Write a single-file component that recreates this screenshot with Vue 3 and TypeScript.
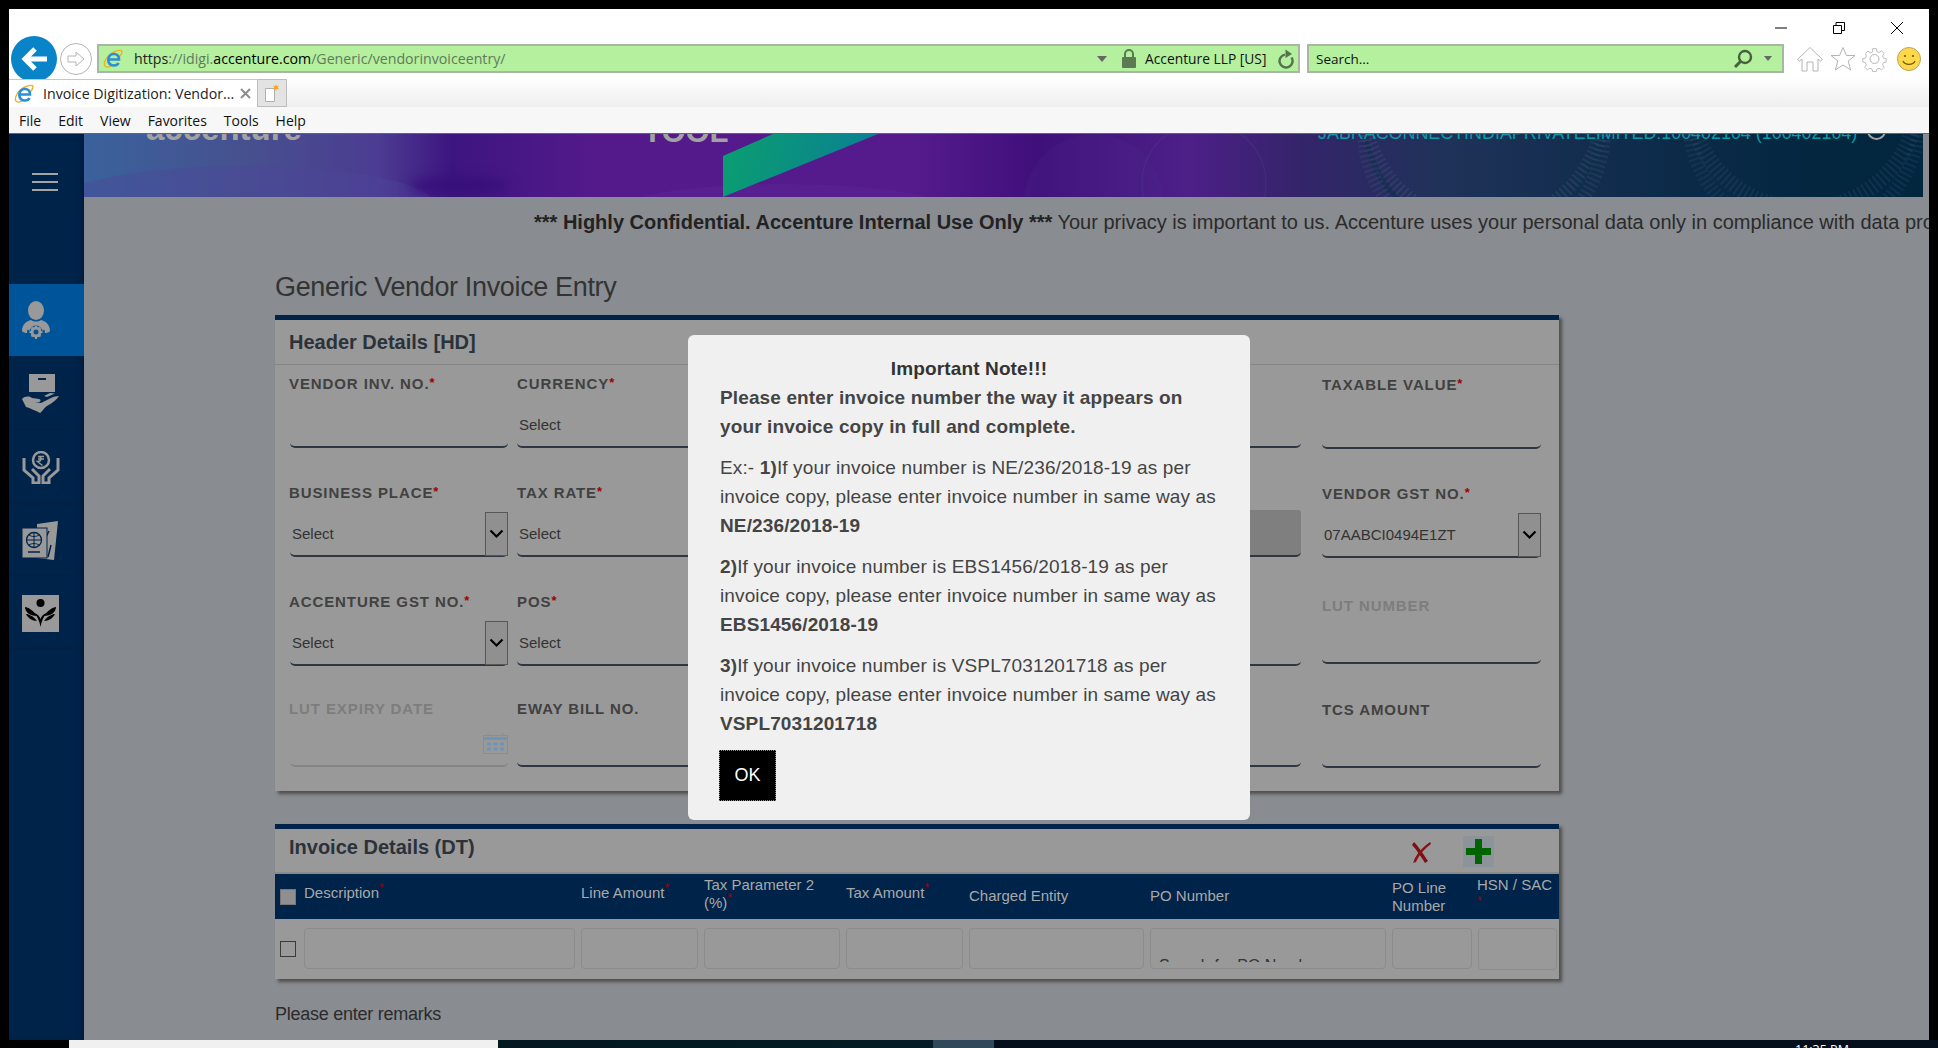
<script setup lang="ts">
interface Field {
  label?: string
  req?: boolean
  kind?: 'input' | 'select' | 'plain' | 'disabled' | 'date' | 'none'
  value?: string
  muted?: boolean
  cls?: string
}

const rows: { cls: string; fields: Field[] }[] = [
  {
    cls: '',
    fields: [
      { label: 'Vendor Inv. No.', req: true, kind: 'input' },
      { label: 'Currency', req: true, kind: 'plain', value: 'Select' },
      { kind: 'none' },
      { kind: 'input' },
      { label: 'Taxable Value', req: true, kind: 'input', cls: 'last' },
    ],
  },
  {
    cls: '',
    fields: [
      { label: 'Business Place', req: true, kind: 'select', value: 'Select' },
      { label: 'Tax Rate', req: true, kind: 'plain', value: 'Select' },
      { kind: 'none' },
      { kind: 'disabled' },
      { label: 'Vendor GST No.', req: true, kind: 'select', value: '07AABCI0494E1ZT', cls: 'last' },
    ],
  },
  {
    cls: '',
    fields: [
      { label: 'Accenture GST No.', req: true, kind: 'select', value: 'Select' },
      { label: 'POS', req: true, kind: 'plain', value: 'Select' },
      { kind: 'none' },
      { kind: 'input' },
      { label: 'LUT Number', kind: 'input', muted: true, cls: 'last lut' },
    ],
  },
  {
    cls: 'short',
    fields: [
      { label: 'LUT Expiry Date', kind: 'date', muted: true },
      { label: 'Eway Bill No.', kind: 'input' },
      { kind: 'none' },
      { kind: 'input' },
      { label: 'TCS Amount', kind: 'input', cls: 'last' },
    ],
  },
]

const cols: { label: string; req?: boolean; cls?: string; width: number }[] = [
  { label: 'Description', req: true, width: 277 },
  { label: 'Line Amount', req: true, width: 123 },
  { label: 'Tax Parameter 2 (%)', req: true, cls: 'two', width: 142 },
  { label: 'Tax Amount', req: true, width: 123 },
  { label: 'Charged Entity', cls: 'low', width: 181 },
  { label: 'PO Number', cls: 'low', width: 242 },
  { label: 'PO Line Number', cls: 'low two', width: 86 },
  { label: 'HSN / SAC', req: true, cls: 'hsn', width: 81 },
]

const menu = ['File', 'Edit', 'View', 'Favorites', 'Tools', 'Help']
</script>

<template>
  <div class="root">
    <div class="window">
      <header class="chrome">
        <div class="winbar">
          <svg class="wc" width="14" height="14" viewBox="0 0 14 14"><path d="M1 7h12" stroke="#000" stroke-width="1" /></svg>
          <svg class="wc" width="14" height="14" viewBox="0 0 14 14" fill="none" stroke="#000"><path d="M1.5 4.5h8v8h-8zM4 4.5v-3h8.500v8h-3" /></svg>
          <svg class="wc" width="14" height="14" viewBox="0 0 14 14"><path d="M1 1l12 12M13 1L1 13" stroke="#000" stroke-width="1" /></svg>
        </div>
        <div class="navrow">
          <div class="back">
            <svg width="46" height="46" viewBox="0 0 46 46"><circle cx="23" cy="23" r="23" fill="#0a84c8" /><path d="M36 23H15M24 13L14 23l10 10" fill="none" stroke="#fff" stroke-width="5" /></svg>
          </div>
          <div class="forward">
            <svg width="32" height="32" viewBox="0 0 32 32" fill="none" stroke="#b5b5b5"><circle cx="16" cy="16" r="15.500" /><path d="M8 13h8V9l8 7-8 7v-4H8z" /></svg>
          </div>
          <div class="address">
            <svg class="ie" width="20" height="20" viewBox="0 0 20 20"><path d="M2 17C0 14 4 6 11 3c4-1.800 8-2.500 8 0 0 2-2 4-3 5" fill="none" stroke="#f0b020" stroke-width="1.400" /><path d="M2 17c1 2 5 1 8-1" fill="none" stroke="#f0b020" stroke-width="1.400" /><path d="M6 10.500h10c0-3.500-1.800-5.500-5-5.500-3.400 0-5.700 2.500-5.700 6 0 3.200 2.200 5.500 5.700 5.500 2.200 0 3.800-1 4.500-2.500" fill="none" stroke="#2b8fd8" stroke-width="2.600" /></svg>
            <span class="url"><span class="dk">https</span><span class="gr">://idigi.</span><span class="bk">accenture.com</span><span class="gr">/Generic/vendorinvoiceentry/</span></span>
            <i class="caret"></i>
            <svg class="lock" width="14" height="19" viewBox="0 0 14 19"><path d="M3 8V5a4 4 0 018 0v3" fill="none" stroke="#5b7a52" stroke-width="2" /><rect y="8" width="14" height="11" rx="1" fill="#5b7a52" /></svg>
            <span class="cert">Accenture LLP [US]</span>
            <svg class="refresh" width="18" height="20" viewBox="0 0 18 20"><path d="M14.500 8.500A6.500 6.500 0 118 5.600" fill="none" stroke="#56734f" stroke-width="2.400" /><path d="M8.500.5L15 5l-6.500 4z" fill="#56734f" /></svg>
          </div>
          <div class="search">
            <span class="stext">Search...</span>
            <svg class="mag" width="22" height="20" viewBox="0 0 22 20"><circle cx="13" cy="8" r="6" fill="none" stroke="#46603f" stroke-width="2.400" /><path d="M8.500 12.500L3 18" stroke="#46603f" stroke-width="3" /></svg>
            <i class="caret small"></i>
          </div>
          <div class="tools">
            <svg width="28" height="26" viewBox="0 0 28 26" fill="none" stroke="#b4b4b4"><path d="M1.500 13.500L14 1.500l12.500 12-2 1.500L22 13v12h-5V16h-6v9H6V13l-2.500 2z" /></svg>
            <svg width="26" height="26" viewBox="0 0 26 26" fill="none" stroke="#b4b4b4"><path d="M13 1.500l3.400 8h8.600l-6.800 5.500 2.500 9L13 19l-7.700 5 2.500-9L1 9.500h8.600z" /></svg>
            <svg width="25" height="26" viewBox="0 0 25 26" fill="none" stroke="#b4b4b4"><circle cx="12.500" cy="13" r="4.500" /><path d="M10.500 1.500h4l.7 3.200 2.400 1 2.800-1.700 2.800 2.800-1.700 2.800 1 2.400 3 .7v3.600l-3 .7-1 2.400 1.700 2.800-2.800 2.800-2.800-1.700-2.400 1-.7 2.700h-4l-.7-2.700-2.400-1-2.800 1.700-2.800-2.800 1.700-2.800-1-2.400-3-.7v-3.600l3-.7 1-2.400L2.600 7.100l2.800-2.800 2.800 1.700 2.400-1z" transform="translate(1.200 1.300) scale(.9)" /></svg>
            <svg class="smile" width="24" height="24" viewBox="0 0 24 24"><circle cx="12" cy="12" r="11.500" fill="#ffd84a" stroke="#b0a468" /><circle cx="8" cy="9" r="1.100" fill="#6b5a12" /><circle cx="16" cy="9" r="1.100" fill="#6b5a12" /><path d="M6 14c2 4.500 10 4.500 12 0" fill="none" stroke="#6b5a12" stroke-width="1.200" /></svg>
          </div>
        </div>
        <div class="tabrow">
          <div class="tab">
            <svg class="ie" width="20" height="20" viewBox="0 0 20 20"><path d="M2 17C0 14 4 6 11 3c4-1.800 8-2.500 8 0 0 2-2 4-3 5" fill="none" stroke="#f0b020" stroke-width="1.400" /><path d="M2 17c1 2 5 1 8-1" fill="none" stroke="#f0b020" stroke-width="1.400" /><path d="M6 10.500h10c0-3.500-1.800-5.500-5-5.500-3.400 0-5.700 2.500-5.700 6 0 3.200 2.200 5.500 5.700 5.500 2.200 0 3.800-1 4.500-2.500" fill="none" stroke="#2b8fd8" stroke-width="2.600" /></svg>
            <span class="tabtitle">Invoice Digitization: Vendor...</span>
            <svg class="tabx" width="11" height="11" viewBox="0 0 11 11"><path d="M1 1l9 9M10 1l-9 9" stroke="#8d8d8d" stroke-width="2" /></svg>
          </div>
          <div class="newtab">
            <svg width="16" height="18" viewBox="0 0 16 18"><path d="M1.500 4.500h9v13h-9z" fill="#fff" stroke="#b0b0b0" /><path d="M12 0l.8 2.200L15 1.500l-1.300 2 1.300 2-2.200-.7L12 7l-.8-2.200-2.200.7 1.300-2-1.300-2 2.200.7z" fill="#f5a623" /></svg>
          </div>
        </div>
        <nav class="menubar">
          <span v-for="m in menu" :key="m">{{ m }}</span>
        </nav>
      </header>

      <div class="page">
        <aside class="sidebar">
          <div class="burger"><i></i><i></i><i></i></div>
          <div class="sitem active">
            <svg width="28" height="38" viewBox="0 0 28 38" fill="#999">
              <ellipse cx="14" cy="9.500" rx="8" ry="9.500" />
              <path d="M0 30c0-7 5-10 9-11 3 2 7 2 10 0 4 1 9 4 9 11-1 1.500-3 2-5 2 0-5-4-9-9-9s-9 4-9 9c-2 0-4-.500-5-2z" />
              <path d="M5 28c1-4 5-7 9-7s8 3 9 7l-3 2H8z" />
              <circle cx="14" cy="31" r="6.500" fill="#00549a" />
              <circle cx="14" cy="31" r="4" fill="none" stroke="#999" stroke-width="3" />
              <path d="M14 25v13M7.500 31h13M9.500 26.500l9 9M18.500 26.500l-9 9" stroke="#999" stroke-width="2" stroke-dasharray="2 9" />
            </svg>
          </div>
          <div class="sitem second">
            <svg width="37" height="39" viewBox="0 0 37 39" fill="#999">
              <rect x="7" width="26" height="18" />
              <rect x="16" y="4" width="8" height="2" fill="#00234a" />
              <path d="M0 25c3-3 7-3 10-1l7 1c2 0 2 3 0 3h-4l6 1 8-4c3-2 7-3 10-3-2 3-6 7-12 10-3 2-5 6-7 7-4-2-10-5-14-6z" />
              <path d="M22 22l6-3 5 .500-8 3.500z" />
            </svg>
          </div>
          <div class="sitem lower">
            <svg width="38" height="33" viewBox="0 0 38 33" fill="none" stroke="#999">
              <circle cx="19" cy="9" r="8" stroke-width="2.500" />
              <path d="M16 5.500h6M16 8h6M16 5.500c4 0 4 5-.500 5l5 4" stroke-width="1.500" />
              <path d="M2 7v12l9 8v5h6v-7l-7-7M36 7v12l-9 8v5h-6v-7l7-7" stroke-width="3" />
            </svg>
          </div>
          <div class="sitem lower">
            <svg width="37" height="39" viewBox="0 0 37 39" fill="none">
              <path d="M15 3l21-3-4 39-17-2z" fill="#999" />
              <path d="M27 10l-5 10M24 24l-3 10M29 24l-3 12" stroke="#00234a" stroke-width="1.500" />
              <rect y="7" width="25" height="30" fill="#999" stroke="#00234a" />
              <circle cx="12" cy="19" r="7.500" stroke="#00234a" stroke-width="1.300" />
              <path d="M4.500 19h15M12 11.500v15M7 14c3 2 7 2 10 0M7 24c3-2 7-2 10 0" stroke="#00234a" stroke-width="1" />
              <path d="M6 31h12" stroke="#00234a" stroke-width="1.500" />
            </svg>
          </div>
          <div class="sitem lower">
            <svg class="logo" width="37" height="37" viewBox="0 0 37 37">
              <circle cx="18.500" cy="8" r="4" fill="#000" />
              <path d="M18.500 32c-1-6-3-10-6-14 3 1 5 3 6 6 1-3 3-5 6-6-3 4-5 8-6 14z" fill="#000" />
              <path d="M15 21C12 16 6 12 3 12c0 5 5 9 12 9zM22 21c3-5 9-9 12-9 0 5-5 9-12 9z" fill="#000" />
              <path d="M15 26C11 21 7 19 4 19c2 4 6 7 11 7zM22 26c4-5 8-7 11-7-2 4-6 7-11 7z" fill="#000" />
            </svg>
          </div>
        </aside>

        <main class="content">
          <div class="banner">
            <svg class="coins" width="1839" height="63" viewBox="0 0 1839 63" fill="none">
              <ellipse cx="160" cy="70" rx="190" ry="38" fill="#4d4599" opacity=".4" />
              <ellipse class="blob" cx="375" cy="52" rx="50" ry="9" fill="#38107a" />
              <ellipse cx="700" cy="74" rx="160" ry="24" fill="#5b2394" opacity=".5" />
              <circle cx="1010" cy="70" r="70" fill="#4a2b8a" opacity=".2" />
              <circle cx="1120" cy="50" r="62" stroke="#4b4a8e" stroke-width="1.500" opacity=".25" />
              <circle cx="1400" cy="-30" r="120" stroke="#4a6a85" stroke-width="14" stroke-dasharray="2 3" opacity=".25" />
              <circle cx="1400" cy="-18" r="120" stroke="#0c2d4a" stroke-width="5" opacity=".5" />
              <circle cx="1400" cy="-4" r="120" stroke="#4a6a85" stroke-width="14" stroke-dasharray="2 3" opacity=".22" />
              <circle cx="1720" cy="-40" r="115" stroke="#3e6180" stroke-width="16" stroke-dasharray="2 3" opacity=".22" />
              <circle cx="1720" cy="-14" r="115" stroke="#3e6180" stroke-width="14" stroke-dasharray="2 3" opacity=".2" />
            </svg>
            <div class="swoosh"></div>
            <span class="brand">accenture</span>
            <span class="toolname">TOOL</span>
            <span class="vendor">JABRACONNECTINDIAPRIVATELIMITED:100402104 (100402104)</span>
            <span class="ring"></span>
          </div>

          <p class="notice"><b>*** Highly Confidential. Accenture Internal Use Only ***</b> Your privacy is important to us. Accenture uses your personal data only in compliance with data protection laws and Accenture's data privacy policies.</p>

          <div class="body">
            <h1 class="title">Generic Vendor Invoice Entry</h1>

            <section class="card head-card">
              <h2 class="card-h">Header Details [HD]</h2>
              <div class="grid">
                <template v-for="(r, ri) in rows" :key="ri">
                  <div v-for="(f, fi) in r.fields" :key="fi" class="field" :class="[r.cls, f.cls, { muted: f.muted, first: fi === 0 }]">
                    <template v-if="f.kind !== 'none'">
                      <div class="label">{{ f.label }}<sup v-if="f.req">*</sup></div>
                      <div class="control" :class="f.kind">
                        <span v-if="f.value" class="val">{{ f.value }}</span>
                        <span v-if="f.kind === 'select'" class="dd">
                          <svg width="15" height="10" viewBox="0 0 15 10"><path d="M1.500 1.500l6 6 6-6" fill="none" stroke="#000" stroke-width="2.200" /></svg>
                        </span>
                        <svg v-if="f.kind === 'date'" class="cal" width="25" height="21" viewBox="0 0 25 21" fill="none">
                          <rect x=".5" y="2.500" width="24" height="18" stroke="#6f94b6" />
                          <path d="M0 5.500h25" stroke="#6f94b6" stroke-width="3" />
                          <path d="M5 0v3M20 0v3" stroke="#6f94b6" />
                          <path d="M4 11h4M10.500 11h4M17 11h4M4 16h4M10.500 16h4M17 16h4" stroke="#6f94b6" stroke-width="3" />
                        </svg>
                      </div>
                    </template>
                  </div>
                </template>
              </div>
            </section>

            <section class="card inv-card">
              <div class="inv-h">
                <h2 class="card-h2">Invoice Details (DT)</h2>
                <div class="actions">
                  <svg class="del" width="23" height="21" viewBox="0 0 23 21"><path d="M3 3l2-3c5 5 10 13 14 19l-3 2C12 15 8 8 3 3z" fill="#7e1014" /><path d="M21 0l1 2C15 7 10 13 7 20l-3 1c1-2 1-3 2-5C10 9 15 4 21 0z" fill="#8a1216" /></svg>
                  <span class="add"><svg width="25" height="25" viewBox="0 0 25 25"><path d="M9 0h7v9h9v7h-9v9H9v-9H0V9h9z" fill="#006400" /></svg></span>
                </div>
              </div>
              <div class="thead">
                <div class="chkcell"><span class="chk filled"></span></div>
                <div v-for="c in cols" :key="c.label" class="th" :class="c.cls" :style="{ width: c.width + 'px' }">{{ c.label }}<sup v-if="c.req">*</sup></div>
              </div>
              <div class="trow">
                <div class="chkcell"><span class="chk"></span></div>
                <div v-for="c in cols" :key="c.label" class="td" :style="{ width: c.width + 'px' }">
                  <div class="tinput" :class="c.cls">
                    <div v-if="c.label === 'PO Number'" class="ph">Search for PO Number</div>
                  </div>
                </div>
              </div>
            </section>

            <p class="remarks">Please enter remarks</p>
          </div>
        </main>

        <div class="modal" role="dialog">
          <div class="m-title">Important Note!!!</div>
          <p class="m-lead">Please enter invoice number the way it appears on your invoice copy in full and complete.</p>
          <p class="m-p">Ex:- <b>1)</b>If your invoice number is NE/236/2018-19 as per invoice copy, please enter invoice number in same way as <b>NE/236/2018-19</b></p>
          <p class="m-p"><b>2)</b>If your invoice number is EBS1456/2018-19 as per invoice copy, please enter invoice number in same way as <b>EBS1456/2018-19</b></p>
          <p class="m-p"><b>3)</b>If your invoice number is VSPL7031201718 as per invoice copy, please enter invoice number in same way as <b>VSPL7031201718</b></p>
          <button class="ok" type="button">OK</button>
        </div>
      </div>
    </div>
    <footer class="taskbar">
      <div class="tb-black"></div>
      <div class="tb-search"></div>
      <div class="tb-dark"></div>
      <div class="tb-active"></div>
      <div class="tb-right"><span class="clock">11:35 PM</span></div>
    </footer>
  </div>
</template>

<style>
html, body { margin: 0; padding: 0; background: #000; overflow: hidden; }
</style>

<style scoped>
* { box-sizing: border-box; }
.root { width: 1938px; height: 1048px; background: #000; display: flex; flex-direction: column; padding-top: 9px; overflow: hidden; font-family: "Liberation Sans", sans-serif; }
.window { width: 1920px; height: 1031px; margin-left: 9px; display: flex; flex-direction: column; background: #fff; flex: none; }

.chrome { height: 125px; flex: none; font-family: "Open Sans", sans-serif; color: #222; }
.winbar { height: 35px; display: flex; justify-content: flex-end; align-items: center; padding: 2px 25px 0 0; gap: 44px; }
.wc { flex: none; }
.navrow { height: 29px; display: flex; align-items: center; padding-left: 2px; }
.back { width: 46px; height: 46px; flex: none; margin-top: 1px; }
.forward { width: 32px; height: 32px; flex: none; margin-left: 3px; }
.address { width: 1203px; height: 29px; margin-left: 5px; background: #b4f09e; border: 2px solid #a9b6a4; display: flex; align-items: center; padding-left: 4px; flex: none; }
.ie { flex: none; }
.url { margin-left: 11px; font-size: 14.200px; white-space: nowrap; width: 963px; }
.url .dk { color: #222; }
.url .gr { color: #5f7a5c; }
.url .bk { color: #000; }
.caret { display: block; width: 0; height: 0; border: 5px solid transparent; border-top: 6px solid #666; border-bottom: 0; flex: none; }
.caret.small { border-width: 4px; border-top-width: 5px; border-bottom-width: 0; margin-left: 10px; }
.lock { margin-left: 15px; flex: none; }
.cert { margin-left: 9px; font-size: 13.800px; white-space: nowrap; color: #111; width: 132px; }
.refresh { flex: none; }
.search { width: 477px; height: 29px; margin-left: 7px; background: #b4f09e; border: 2px solid #a9b6a4; display: flex; align-items: center; padding-left: 7px; flex: none; }
.stext { font-size: 13.500px; width: 416px; color: #111; }
.mag { flex: none; }
.tools { display: flex; align-items: center; gap: 6px; margin-left: 12px; flex: none; }
.tools svg { flex: none; }
.tools .smile { margin-left: 4px; }
.tabrow { height: 34px; padding-top: 6px; display: flex; background: linear-gradient(#fff 15%, #eeeeee); }
.tab { width: 249px; height: 28px; background: #fff; border-right: 1px solid #bdbdbd; border-top: 1px solid #c8c8c8; display: flex; align-items: center; padding-left: 5px; }
.tabtitle { margin-left: 9px; font-size: 14.200px; white-space: nowrap; color: #222; width: 197px; }
.tabx { flex: none; }
.newtab { width: 29px; height: 28px; background: #e3e3e3; border: 1px solid #bdbdbd; border-left: 0; display: flex; align-items: center; justify-content: center; }
.menubar { height: 27px; background: #f7f7f7; display: flex; align-items: center; gap: 17px; padding-left: 10px; font-size: 14px; color: #111; border-bottom: 1px solid #666; }

.page { position: relative; height: 906px; flex: none; display: flex; background: #898c90; overflow: hidden; }
.sidebar { width: 75px; flex: none; background: #00234a; display: flex; flex-direction: column; box-shadow: inset -6px 0 6px -4px #001a38; }
.burger { height: 150px; padding: 39px 0 0 23px; display: flex; flex-direction: column; gap: 6px; }
.burger i { display: block; width: 26px; height: 2px; background: #a3a3a3; }
.sitem { height: 73px; display: flex; align-items: center; padding-left: 13px; border-bottom: 1px solid #032040; }
.sitem.active { background: #00549a; height: 72px; border: 0; }
.sitem.second { height: 74px; padding-top: 2px; }
.sitem.lower { padding-top: 2px; }
.logo { background: #999; }

.content { flex: 1; min-width: 0; display: flex; flex-direction: column; }
.banner { position: relative; width: 1839px; height: 63px; flex: none; overflow: hidden; display: flex; background: linear-gradient(90deg, #3a629c 0, #47508f 9%, #4c3c92 16%, #3d1580 20%, #541a8c 28%, #551b8c 45%, #3f0f7a 52%, #4d1f88 60%, #34246a 66%, #1f3258 74%, #0f2c4c 84%, #04263f 94%, #03263f 100%); }
.coins { position: absolute; left: 0; top: 0; }
.blob { filter: blur(6px); }
.swoosh { position: absolute; left: 639px; top: 0; width: 155px; height: 63px; background: linear-gradient(105deg, #0a9f6f, #0a7d98); clip-path: polygon(50px 0, 100% 0, 0 100%, 0 22px); }
.brand { position: relative; margin: -22px 0 0 62px; font-size: 33px; line-height: 33px; height: 33px; font-weight: 700; color: #a2a2a2; width: 500px; flex: none; }
.toolname { position: relative; margin: -18px 0 0 -3px; font-size: 31px; line-height: 31px; height: 31px; font-weight: 700; color: #a2a2a2; width: 675px; flex: none; }
.vendor { position: relative; margin: -10px 0 0 0; font-size: 17.900px; line-height: 18px; height: 18px; color: #0b9aa8; white-space: nowrap; width: 549px; flex: none; }
.ring { position: relative; margin-top: -13px; width: 19px; height: 19px; border: 2.500px solid #a3a3a3; border-radius: 50%; flex: none; }

.notice { margin: 0; height: 50px; padding-left: 450px; font-size: 20px; line-height: 50px; white-space: nowrap; color: #2b2b2b; width: 1845px; overflow: hidden; flex: none; }
.notice b { color: #222; }
.body { padding-left: 191px; display: flex; flex-direction: column; flex: 1; min-height: 0; }
.title { margin: 0; height: 68px; padding-top: 11px; font-size: 27px; line-height: 58px; font-weight: 400; letter-spacing: -.35px; color: #333; white-space: nowrap; flex: none; }

.card { width: 1284px; background: #999; border-top: 5px solid #00234a; box-shadow: 3px 3px 3px #4f4f4f; flex: none; }
.head-card { height: 476px; }
.card-h { margin: 0; height: 45px; padding-left: 14px; font-size: 20px; line-height: 44px; font-weight: 700; color: #2b323a; border-bottom: 1px solid #868686; }
.grid { display: grid; grid-template-columns: 227px 227px 339px 239px 219px; grid-template-rows: 109px 109px 109px 99px; padding-left: 15px; }
.field { width: 218px; }
.field.last { width: 219px; margin-top: 1px; }
.field.first .label { margin-left: -1px; }
.label { height: 38px; font-size: 15px; line-height: 38px; font-weight: 700; text-transform: uppercase; letter-spacing: .9px; color: #414141; white-space: nowrap; }
.label sup { color: #a00000; font-size: 13px; line-height: 0; vertical-align: 2px; letter-spacing: 0; }
.field.muted .label { color: #7d7d7d; }
.control { position: relative; height: 45px; border-bottom: 2px solid #2d3641; border-radius: 0 0 5px 5px; display: flex; align-items: center; padding-left: 2px; font-size: 15px; color: #333; }
.control.disabled { height: 47px; margin-top: -2px; background: #7f7f7f; border-radius: 0 3px 5px 5px; }
.control.date { border-bottom-color: #858585; }
.short .label { height: 33px; line-height: 33px; }
.short .control { height: 42px; }
.field.lut { margin-top: 0; }
.field.lut .label { height: 46px; line-height: 46px; }
.field.lut .control { height: 35px; }
.val { white-space: nowrap; }
.dd { position: absolute; right: 0; top: 0; width: 23px; height: 44px; background: #909090; border: 1.500px solid #575757; display: flex; align-items: center; justify-content: center; }
.cal { position: absolute; right: 0; top: 8px; }

.inv-card { height: 155px; margin-top: 33px; }
.inv-h { height: 45px; display: flex; justify-content: space-between; padding-left: 14px; border-bottom: 2px solid #8a8a8a; }
.card-h2 { margin: 0; font-size: 20px; line-height: 36px; font-weight: 700; color: #2b323a; }
.actions { display: flex; align-items: flex-start; padding: 7px 65px 0 0; gap: 31px; }
.del { margin-top: 6px; }
.add { width: 31px; height: 31px; background: #8c939a; display: flex; align-items: center; justify-content: center; }
.thead { height: 45px; background: #00234a; display: flex; }
.chkcell { width: 29px; padding-left: 5px; flex: none; }
.thead .chkcell { padding-top: 15px; }
.trow .chkcell { padding-top: 22px; }
.chk { display: block; width: 16px; height: 16px; border: 1.500px solid #3a3a3a; background: #999; }
.chk.filled { background: #8f8f8f; border-color: #777; }
.th { flex: none; padding: 10px 6px 0 0; font-size: 15px; line-height: 18px; color: #a9a9a9; }
.th sup { color: #a00000; font-size: 12px; line-height: 0; }
.th.two { padding-top: 2px; padding-right: 18px; }
.th.low { padding-top: 13px; }
.th.low.two { padding-top: 5px; padding-right: 0; }
.th.hsn { padding-top: 2px; padding-right: 0; white-space: nowrap; margin-left: -1px; }
.th.hsn sup { display: block; line-height: 14px; }
.trow { height: 60px; display: flex; }
.td { flex: none; padding: 9px 6px 0 0; }
.tinput { height: 41px; border: 1px solid #8b8b8b; border-radius: 4px; overflow: hidden; }
.tinput.hsn { height: 42px; margin-right: -4px; }
.ph { margin: 29px 0 0 8px; height: 4px; overflow: hidden; font-size: 16px; line-height: 16px; color: #333; white-space: nowrap; }
.remarks { margin: 23px 0 0; font-size: 18px; line-height: 24px; letter-spacing: -.25px; color: #2b2b2b; }

.modal { position: absolute; left: 679px; top: 201px; width: 562px; height: 485px; padding: 19px 26px 0 32px; background: #f0f0f0; border-radius: 6px; font-size: 19px; line-height: 29px; letter-spacing: .13px; color: #444; }
.m-title { text-align: center; margin-right: -26px; margin-left: -32px; font-weight: 700; line-height: 29px; color: #333; }
.m-lead { margin: 0 0 12px; font-weight: 700; }
.m-p { margin: 0 0 12px; }
.ok { display: block; width: 57px; height: 51px; margin: 0 0 0 -1px; padding: 0; background: #000; color: #fff; border: 1px dotted #888; font-family: "Liberation Sans", sans-serif; font-size: 18px; cursor: pointer; }

.taskbar { height: 8px; flex: none; display: flex; }
.tb-black { width: 69px; background: #000; }
.tb-search { width: 429px; background: #f0f0f0; }
.tb-dark { width: 435px; background: linear-gradient(90deg, #03181f, #051c26); }
.tb-active { width: 61px; background: #31475a; }
.tb-right { flex: 1; background: #050f1c; overflow: hidden; padding-left: 801px; }
.clock { display: block; font-family: "Open Sans", sans-serif; font-size: 12.500px; line-height: 16px; color: #fff; margin-top: 2px; white-space: nowrap; }
</style>
